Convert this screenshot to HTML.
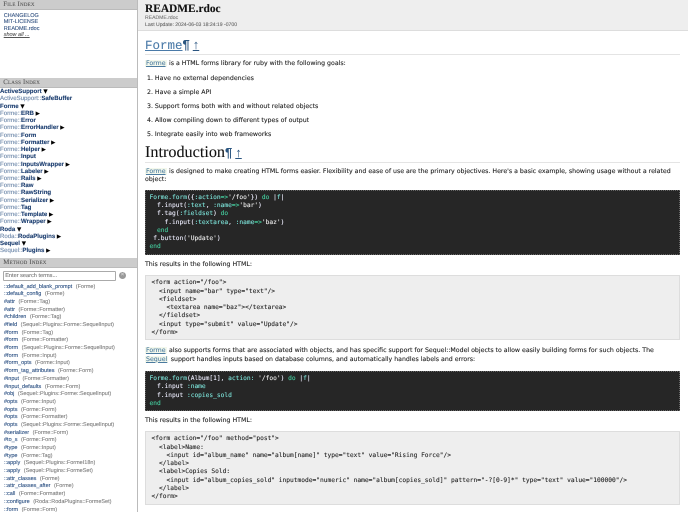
<!DOCTYPE html>
<html><head><meta charset="utf-8"><title>README.rdoc</title>
<style>
*{margin:0;padding:0;box-sizing:border-box}
html,body{width:688px;height:512px;overflow:hidden;background:#fff}
body{font-family:"Liberation Sans",sans-serif;color:#222;text-rendering:geometricPrecision}
#w{position:relative;width:688px;height:512px;overflow:hidden;background:#fff;filter:blur(.3px);-webkit-text-stroke:.1px}
.a{position:absolute;white-space:pre}
.hd{position:absolute;left:0;width:137px;background:#ccc;border-bottom:1px solid #bbb;font:6.8px/10px "Liberation Serif",serif;font-variant:small-caps;color:#555;padding-left:3.3px;letter-spacing:.2px}
#side{position:absolute;left:137px;top:0;width:1px;height:512px;background:#bbb}
.files{position:absolute;left:3.7px;top:12.6px;font-size:5.5px;line-height:6.6px;color:#2f4f7f}
.files i{font-style:italic;color:#555;text-decoration:underline}
.cls{position:absolute;left:0;top:88.2px;font-size:6.1px;line-height:7.23px;color:#6a85a8;white-space:pre}
.cls b{color:#1c3e70}
.cls u{text-decoration:none;color:#000;font:5.5px/0 "DejaVu Sans",sans-serif}
.mth{position:absolute;left:4px;top:283.6px;font-size:5.5px;line-height:7.68px;color:#7d7d7d;white-space:pre}
.mth b{font-weight:normal;color:#2a4f82;margin-right:2px}
#srch{position:absolute;left:2.7px;top:270.5px;width:113px;height:10px;border:1px solid #aaa;border-radius:1px;font-size:5.6px;line-height:8px;color:#777;padding-left:1.5px;background:#fff}
#clr{position:absolute;left:119px;top:272.2px;width:7px;height:7px;border-radius:50%;background:#999;color:#ddd;font-size:6px;line-height:7px;text-align:center}
#top{position:absolute;left:138px;top:0;width:550px;height:31px;background:#eee;border-bottom:1px solid #ddd}
.hr{position:absolute;left:145px;width:535px;height:1px;background:#e4e4e4}
.p{position:absolute;left:145px;width:535px;font-family:"DejaVu Sans",sans-serif;font-size:6.24px;line-height:8.4px;color:#222;white-space:pre}
.l{text-decoration:underline;color:#4a7a9f;background:#f3f8ec;padding:0 1px;margin-right:.5px;font-family:"DejaVu Sans",sans-serif}
.pm{color:#2a5580;font:bold 13px/12px "Liberation Sans",sans-serif;-webkit-text-stroke:0}
.up{color:#2a5580;font:13px/12px "Liberation Serif",serif;text-decoration:underline;margin-left:3px;-webkit-text-stroke:0}
pre{position:absolute;left:145px;width:535px;font-family:"DejaVu Sans Mono","Liberation Mono",monospace;font-size:6.22px;line-height:8.26px}
.dk{background:#262626;color:#eef;border:1px dotted #666;padding-left:3.5px}
.lt{background:#eee;color:#222;border:1px solid #ddd;padding-left:5.5px}
.c{color:#7ee6dc}.g{color:#45d0a0}.s{color:#eee}
</style></head><body><div id="w">
<div class="hd" style="top:0;height:10px">File Index</div>
<div class="files">CHANGELOG
<br>MIT-LICENSE
<br>README.rdoc
<br><i>show all ...</i></div>
<div class="hd" style="top:77.5px;height:10.5px">Class Index</div>
<div class="cls"><b>ActiveSupport</b> <u>▼</u>
ActiveSupport::<b>SafeBuffer</b>
<b>Forme</b> <u>▼</u>
Forme::<b>ERB</b> <u>▶</u>
Forme::<b>Error</b>
Forme::<b>ErrorHandler</b> <u>▶</u>
Forme::<b>Form</b>
Forme::<b>Formatter</b> <u>▶</u>
Forme::<b>Helper</b> <u>▶</u>
Forme::<b>Input</b>
Forme::<b>InputsWrapper</b> <u>▶</u>
Forme::<b>Labeler</b> <u>▶</u>
Forme::<b>Rails</b> <u>▶</u>
Forme::<b>Raw</b>
Forme::<b>RawString</b>
Forme::<b>Serializer</b> <u>▶</u>
Forme::<b>Tag</b>
Forme::<b>Template</b> <u>▶</u>
Forme::<b>Wrapper</b> <u>▶</u>
<b>Roda</b> <u>▼</u>
Roda::<b>RodaPlugins</b> <u>▶</u>
<b>Sequel</b> <u>▼</u>
Sequel::<b>Plugins</b> <u>▶</u></div>
<div class="hd" style="top:258px;height:10px">Method Index</div>
<div id="srch">Enter search terms...</div><div id="clr">×</div>
<div class="mth"><b>::default_add_blank_prompt</b> (Forme)
<b>::default_config</b> (Forme)
<b>#attr</b> (Forme::Tag)
<b>#attr</b> (Forme::Formatter)
<b>#children</b> (Forme::Tag)
<b>#field</b> (Sequel::Plugins::Forme::SequelInput)
<b>#form</b> (Forme::Tag)
<b>#form</b> (Forme::Formatter)
<b>#form</b> (Sequel::Plugins::Forme::SequelInput)
<b>#form</b> (Forme::Input)
<b>#form_opts</b> (Forme::Input)
<b>#form_tag_attributes</b> (Forme::Form)
<b>#input</b> (Forme::Formatter)
<b>#input_defaults</b> (Forme::Form)
<b>#obj</b> (Sequel::Plugins::Forme::SequelInput)
<b>#opts</b> (Forme::Input)
<b>#opts</b> (Forme::Form)
<b>#opts</b> (Forme::Formatter)
<b>#opts</b> (Sequel::Plugins::Forme::SequelInput)
<b>#serializer</b> (Forme::Form)
<b>#to_s</b> (Forme::Form)
<b>#type</b> (Forme::Input)
<b>#type</b> (Forme::Tag)
<b>::apply</b> (Sequel::Plugins::FormeI18n)
<b>::apply</b> (Sequel::Plugins::FormeSet)
<b>::attr_classes</b> (Forme)
<b>::attr_classes_after</b> (Forme)
<b>::call</b> (Forme::Formatter)
<b>::configure</b> (Roda::RodaPlugins::FormeSet)
<b>::form</b> (Forme::Form)</div>
<div id="side"></div>

<div id="top"></div>
<div class="a" style="left:145px;top:1px;font:bold 11.4px/17px 'Liberation Serif',serif;color:#111">README.rdoc</div>
<div class="a" style="left:145px;top:16.5px;font-size:5.1px;line-height:3.6px;color:#777">README.rdoc</div>
<div class="a" style="left:145px;top:22.5px;font-size:5.1px;line-height:4px;color:#666">Last Update: 2024-06-03 18:24:19 -0700</div>

<div class="a" style="left:145px;top:36.5px;font:12.5px/18px 'Liberation Mono',monospace;color:#4a7aa8"><span style="text-decoration:underline">Forme</span><span class="pm">¶</span><span class="up">↑</span></div>
<div class="hr" style="top:54px"></div>
<div class="p" style="top:59.8px"><span class="l">Forme</span> is a HTML forms library for ruby with the following goals:</div>
<div class="p" style="top:74.5px;left:147px">1. Have no external dependencies</div>
<div class="p" style="top:88.8px;left:147px">2. Have a simple API</div>
<div class="p" style="top:102.8px;left:147px">3. Support forms both with and without related objects</div>
<div class="p" style="top:117px;left:147px">4. Allow compiling down to different types of output</div>
<div class="p" style="top:131px;left:147px">5. Integrate easily into web frameworks</div>
<div class="a" style="left:145px;top:142px;font:16.2px/20px 'Liberation Serif',serif;color:#111">Introduction<span class="pm">¶</span><span class="up">↑</span></div>
<div class="hr" style="top:162px"></div>
<div class="p" style="top:167.6px"><span class="l">Forme</span> is designed to make creating HTML forms easier. Flexibility and ease of use are the primary objectives. Here's a basic example, showing usage without a related
object:</div>

<pre class="dk" style="top:189.5px;height:65px;padding-top:3.4px"><span class="c">Forme.form</span>({<span class="c">:action</span><span class="g">=&gt;</span><span class="s">'/foo'</span>}) <span class="g">do</span> |<span class="c">f</span>|
  f.input(<span class="c">:text</span>, <span class="c">:name</span><span class="g">=&gt;</span><span class="s">'bar'</span>)
  f.tag(<span class="c">:fieldset</span>) <span class="g">do</span>
    f.input(<span class="c">:textarea</span>, <span class="c">:name</span><span class="g">=&gt;</span><span class="s">'baz'</span>)
  <span class="g">end</span>
 f.button(<span class="s">'Update'</span>)
<span class="g">end</span></pre>
<div class="p" style="top:261px">This results in the following HTML:</div>
<pre class="lt" style="top:275px;height:64.5px;padding-top:3.4px">&lt;form action="/foo"&gt;
  &lt;input name="bar" type="text"/&gt;
  &lt;fieldset&gt;
    &lt;textarea name="baz"&gt;&lt;/textarea&gt;
  &lt;/fieldset&gt;
  &lt;input type="submit" value="Update"/&gt;
&lt;/form&gt;</pre>
<div class="p" style="top:347.2px"><span class="l">Forme</span> also supports forms that are associated with objects, and has specific support for Sequel::Model objects to allow easily building forms for such objects. The
<span class="l">Sequel</span> support handles inputs based on database columns, and automatically handles labels and errors:</div>
<pre class="dk" style="top:370.7px;height:40px;padding-top:3.4px"><span class="c">Forme.form</span>(Album[1], <span class="c">action:</span> <span class="s">'/foo'</span>) <span class="g">do</span> |<span class="c">f</span>|
  f.input <span class="c">:name</span>
  f.input <span class="c">:copies_sold</span>
<span class="g">end</span></pre>
<div class="p" style="top:417px">This results in the following HTML:</div>
<pre class="lt" style="top:431px;height:74px;padding-top:3.4px">&lt;form action="/foo" method="post"&gt;
  &lt;label&gt;Name:
    &lt;input id="album_name" name="album[name]" type="text" value="Rising Force"/&gt;
  &lt;/label&gt;
  &lt;label&gt;Copies Sold:
    &lt;input id="album_copies_sold" inputmode="numeric" name="album[copies_sold]" pattern="-?[0-9]*" type="text" value="100000"/&gt;
  &lt;/label&gt;
&lt;/form&gt;</pre>
</div></body></html>
